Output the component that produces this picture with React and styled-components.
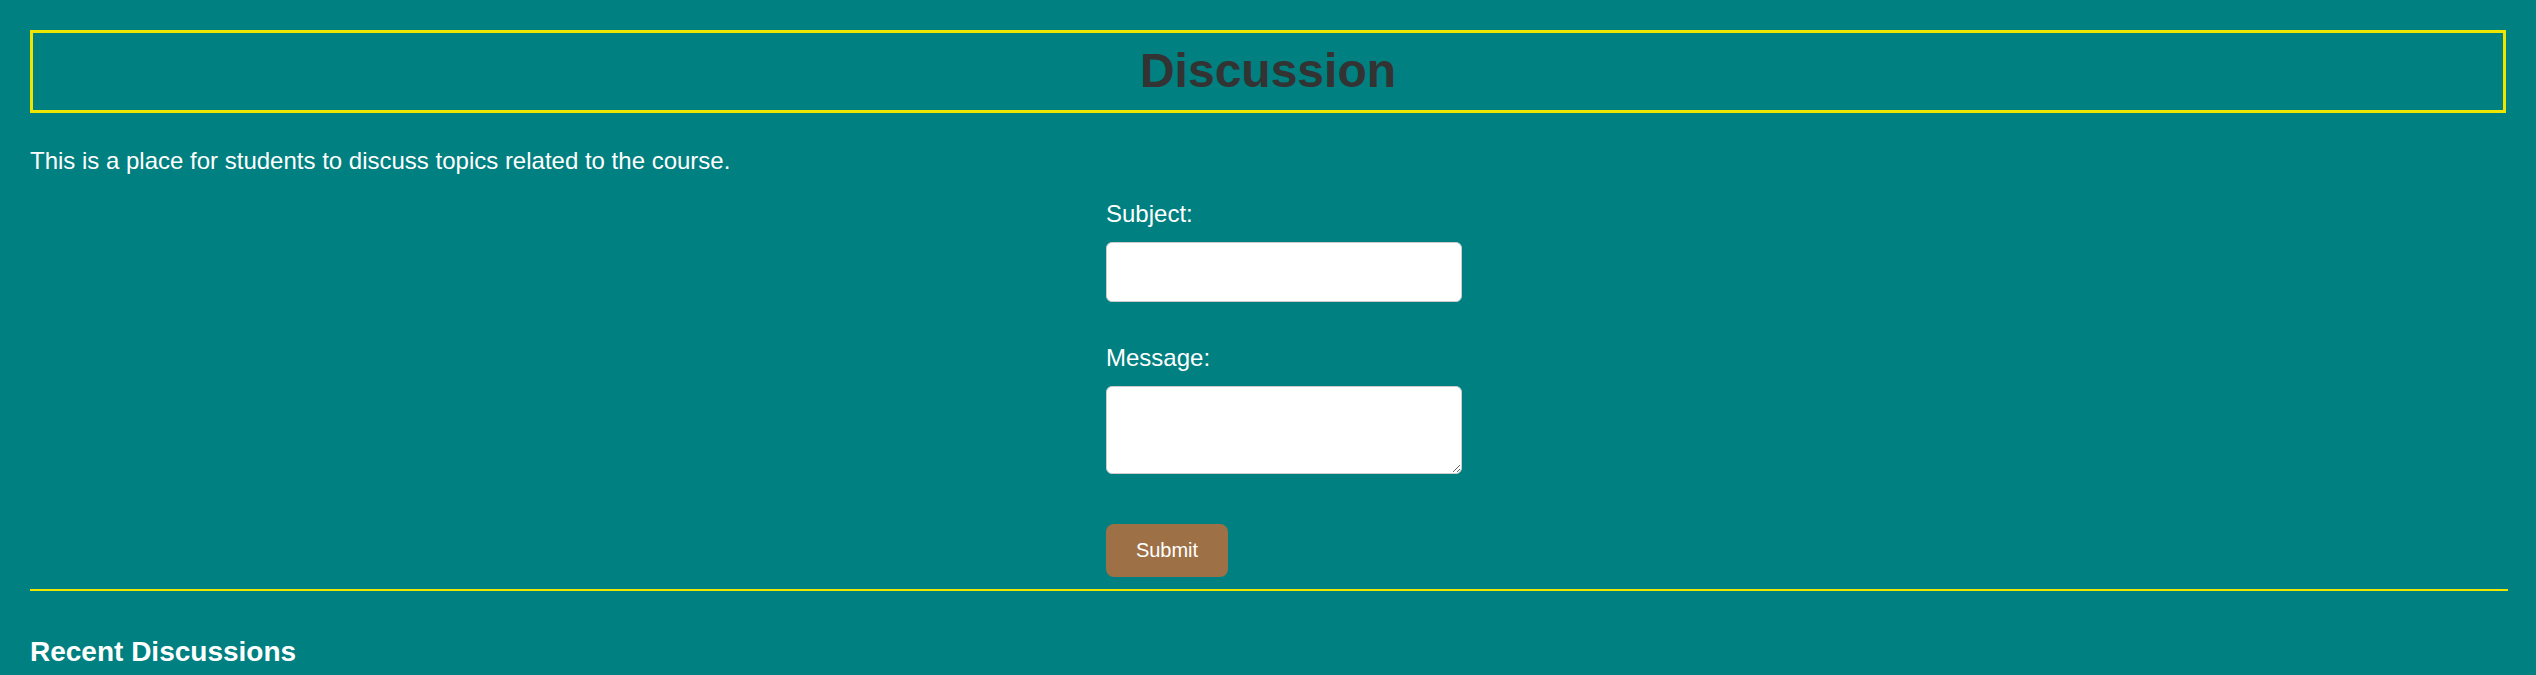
import styled, { createGlobalStyle } from "styled-components";

const GlobalStyle = createGlobalStyle`
  body {
    margin: 0;
    background-color: #008080;
    color: #ffffff;
    font-family: "Liberation Sans", Arial, sans-serif;
    font-size: 24px;
  }
`;

function App() {
  return (
    <>
      <GlobalStyle />
      <Page>
        <Header>
          <h1>Discussion</h1>
        </Header>
        <Intro>
          This is a place for students to discuss topics related to the course.
        </Intro>
        <Form onSubmit={(e) => e.preventDefault()}>
          <Label htmlFor="subject">Subject:</Label>
          <Input id="subject" type="text" />
          <Label htmlFor="message" $spaced>
            Message:
          </Label>
          <TextArea id="message" />
          <Button type="submit">Submit</Button>
        </Form>
        <Divider />
        <h3 className="recent">Recent Discussions</h3>
      </Page>
    </>
  );
}

export default App;

const Page = styled.div`
  padding: 30px 28px 0 30px;

  h3.recent {
    margin: 45px 0 0;
    font-size: 28px;
    font-weight: 700;
    line-height: 32px;
  }
`;

const Header = styled.header`
  border: 3px solid #efe600;
  padding: 10px 0 12px;
  margin-right: 2px;

  h1 {
    margin: 0;
    font-size: 48px;
    font-weight: 700;
    line-height: 55px;
    text-align: center;
    color: #333333;
  }
`;

const Intro = styled.p`
  margin: 34px 0 0;
  line-height: 27px;
`;

const Form = styled.form`
  display: flex;
  flex-direction: column;
  align-items: flex-start;
  width: 356px;
  margin: 26px 0 0 calc(50% - 163px);
`;

const Label = styled.label`
  display: block;
  line-height: 28px;
  margin-top: ${(props) => (props.$spaced ? "42px" : "0")};
  margin-bottom: 14px;
`;

const Input = styled.input`
  box-sizing: border-box;
  width: 356px;
  height: 60px;
  border: 1px solid #cccccc;
  border-radius: 6px;
  background: #ffffff;
  font-size: 20px;
  padding: 0 12px;
`;

const TextArea = styled.textarea`
  box-sizing: border-box;
  width: 356px;
  height: 88px;
  border: 1px solid #cccccc;
  border-radius: 6px;
  background: #ffffff;
  font-size: 20px;
  padding: 8px 12px;
  margin: 0;
`;

const Button = styled.button`
  margin-top: 50px;
  width: 122px;
  height: 53px;
  border: none;
  border-radius: 8px;
  background-color: #9e7046;
  color: #ffffff;
  font-family: "Liberation Sans", Arial, sans-serif;
  font-size: 20px;
  cursor: pointer;
`;

const Divider = styled.hr`
  margin: 12px 0 0;
  height: 2px;
  border: none;
  background-color: #efe600;
`;
